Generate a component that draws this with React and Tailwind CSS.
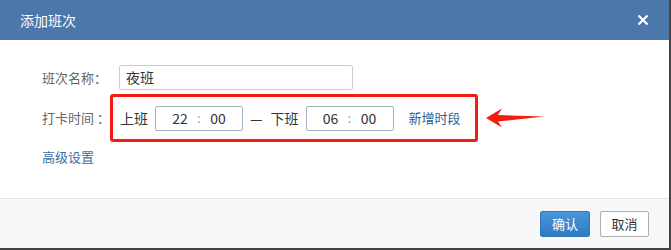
import React from "react";

function TimeBox({ hour, minute }) {
  return (
    <div className="flex h-[25px] w-[88px] items-center justify-center rounded-[2px] border border-[#a7b2c0] bg-white text-[14px] text-[#333]">
      <span className="w-[30px] text-center">{hour}</span>
      <span className="w-[8px] text-center text-[12px] text-[#999]">:</span>
      <span className="w-[30px] text-center">{minute}</span>
    </div>
  );
}

function Arrow() {
  return (
    <svg width="60" height="20" viewBox="0 0 60 20" className="ml-[7px]">
      <polygon
        points="1,10 17,0.5 13,7 59,8.5 13,13.5 17,19.5"
        fill="#f31c12"
      />
    </svg>
  );
}

export default function App() {
  return (
    <div className="flex h-[250px] w-[671px] flex-col border-b-2 border-r-2 border-[#444] bg-white font-['Noto_Sans_CJK_SC',sans-serif]">
      <div className="flex h-[40px] shrink-0 items-center justify-between bg-[#4b77ab] pl-[20px] pr-[20px] text-white">
        <span className="text-[14px]">添加班次</span>
        <svg width="12" height="12" viewBox="0 0 12 12">
          <path d="M1.5 1.5 L10.5 10.5 M10.5 1.5 L1.5 10.5" stroke="#fff" strokeWidth="2.2" />
        </svg>
      </div>

      <div className="flex flex-1 flex-col pl-[42px] pt-[25px]">
        <div className="flex items-center">
          <span className="w-[77px] text-[13px] text-[#666]">班次名称：</span>
          <div className="flex h-[25px] w-[234px] items-center rounded-[2px] border border-[#ccc] pl-[6px] text-[14px] text-[#333]">
            夜班
          </div>
        </div>

        <div className="mt-[4px] flex items-center">
          <span className="w-[68px] text-[13px] text-[#666]">打卡时间 ：</span>
          <div className="flex h-[48px] w-[368px] items-center rounded-[3px] border-[3px] border-[#f31c12] pl-[7px] text-[14px] text-[#333]">
            <span>上班</span>
            <div className="ml-[7px]">
              <TimeBox hour="22" minute="00" />
            </div>
            <span className="ml-[7px]">—</span>
            <span className="ml-[8px]">下班</span>
            <div className="ml-[7px]">
              <TimeBox hour="06" minute="00" />
            </div>
            <span className="ml-[15px] text-[13px] text-[#2b5c92]">新增时段</span>
          </div>
          <Arrow />
        </div>

        <span className="mt-[5px] text-[13px] text-[#3b6ea6]">高级设置</span>
      </div>

      <div className="flex h-[50px] shrink-0 items-center justify-end gap-[10px] border-t border-[#e5e5e5] bg-[#f8f8f8] pr-[20px]">
        <button className="h-[26px] w-[50px] rounded-[2px] border border-[#2f78bd] bg-gradient-to-b from-[#4a95d9] to-[#2f7bc2] text-[13px] text-white">
          确认
        </button>
        <button className="h-[26px] w-[49px] rounded-[2px] border border-[#adadad] bg-white text-[13px] text-[#333]">
          取消
        </button>
      </div>
    </div>
  );
}
